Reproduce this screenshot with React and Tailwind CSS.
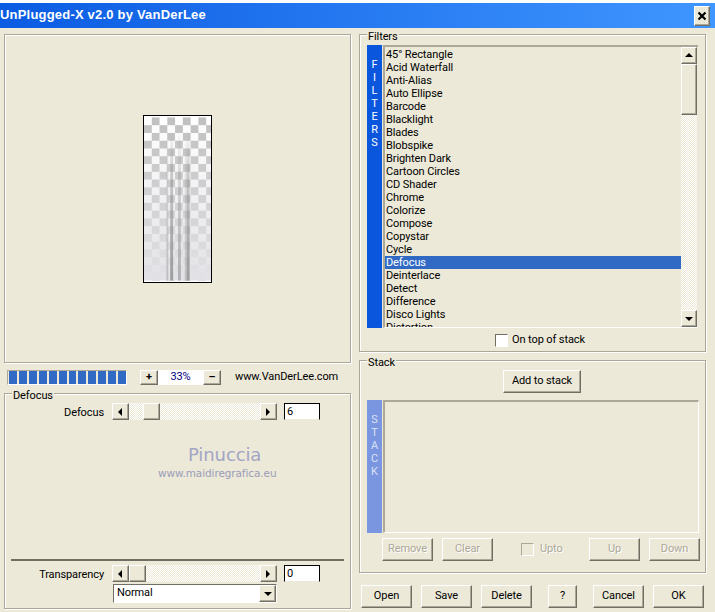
import React from 'react';

const FILTERS = [
  '45° Rectangle', 'Acid Waterfall', 'Anti-Alias', 'Auto Ellipse', 'Barcode', 'Blacklight', 'Blades', 'Blobspike',
  'Brighten Dark', 'Cartoon Circles', 'CD Shader', 'Chrome', 'Colorize', 'Compose', 'Copystar', 'Cycle', 'Defocus',
  'Deinterlace', 'Detect', 'Difference', 'Disco Lights', 'Distortion',
];

const raised = 'border border-t-white border-l-white border-r-[#716f64] border-b-[#716f64] shadow-[inset_-1px_-1px_0_#aca899]';
const dither = 'bg-[repeating-conic-gradient(#ece9d8_0_25%,#ffffff_0_50%)] bg-[length:2px_2px]';
const etched = 'relative border border-[#aca899] shadow-[inset_1px_1px_0_#ffffff,1px_1px_0_#ffffff]';

const Btn = ({ className = '', disabled, children }) => (
  <div className={`${raised} flex items-center justify-center bg-[#ece9d8] ${disabled ? 'text-[#aca899] [text-shadow:1px_1px_0_#fff]' : 'text-black'} ${className}`}>
    {children}
  </div>
);

const Legend = ({ children }) => (
  <span className="absolute left-[7px] top-[-5px] bg-[#ece9d8] px-[1px] leading-[14px] text-black">{children}</span>
);

const Arrow = ({ dir }) => {
  const points = { left: '6,1 6,9 2,5', right: '2,1 2,9 6,5', up: '1,6 9,6 5,2', down: '1,3 9,3 5,7' }[dir];
  return (
    <svg width="10" height="10" viewBox="0 0 10 10">
      <polygon points={points} fill="#000" />
    </svg>
  );
};

const Slider = ({ thumbLeft, value, label }) => (
  <div className="flex h-[17px] items-center">
    <span className="w-[99px] pt-[1px] text-right leading-none">{label}</span>
    <div className="ml-[8px] flex h-[17px] w-[165px]">
      <Btn className="h-[17px] w-[17px] shrink-0"><Arrow dir="left" /></Btn>
      <div className={`h-[17px] flex-1 ${dither}`}>
        <div className={`${raised} h-[17px] w-[17px] bg-[#ece9d8] ${thumbLeft}`} />
      </div>
      <Btn className="h-[17px] w-[17px] shrink-0"><Arrow dir="right" /></Btn>
    </div>
    <div className="ml-[7px] flex h-[17px] w-[36px] items-center border border-b-[#ece9d8] border-black bg-white pl-[2px] leading-none">{value}</div>
  </div>
);

const Preview = () => {
  const squares = [];
  for (let r = 0; r < 21; r++) {
    for (let c = 0; c < 9; c++) {
      if ((r + c) % 2 === 1) squares.push(<rect key={`${r}-${c}`} x={c * 8} y={r * 8} width="8" height="8" fill="#c0c0c0" />);
    }
  }
  return (
    <svg width="69" height="168" viewBox="0 0 69 168" className="block border border-black bg-white">
      <defs>
        <linearGradient id="fade" x1="0" y1="0" x2="0" y2="1">
          <stop offset="0" stopColor="#e2e2e6" stopOpacity="0" />
          <stop offset="1" stopColor="#e2e2e6" stopOpacity="1" />
        </linearGradient>
        <linearGradient id="bars" x1="0" y1="0" x2="0" y2="1">
          <stop offset="0" stopColor="#777" stopOpacity="0" />
          <stop offset="0.3" stopColor="#777" stopOpacity="0.35" />
          <stop offset="1" stopColor="#777" stopOpacity="0.65" />
        </linearGradient>
      </defs>
      {squares}
      <rect width="69" height="168" fill="url(#fade)" />
      <rect x="23" y="12" width="2" height="156" fill="url(#bars)" opacity="0.5" />
      <rect x="27" y="12" width="3" height="156" fill="url(#bars)" />
      <rect x="35" y="12" width="3" height="156" fill="url(#bars)" opacity="0.7" />
      <rect x="42" y="12" width="2" height="156" fill="url(#bars)" opacity="0.5" />
      <rect x="44" y="12" width="3" height="156" fill="url(#bars)" />
    </svg>
  );
};

const SideStrip = ({ letters, className }) => (
  <div className={`flex w-[15px] shrink-0 flex-col items-center ${className}`}>
    {letters.map((l, i) => (
      <span key={i} className="h-[13px] leading-[13px]">{l}</span>
    ))}
  </div>
);

export default function App() {
  return (
    <div className="flex h-[612px] w-[715px] flex-col overflow-hidden bg-[#ece9d8] font-['Roboto',sans-serif] text-[11px] tracking-[-0.1px] text-black">
      <div className="h-[3px] shrink-0 bg-white" />
      {/* title bar */}
      <div className="flex h-[25px] shrink-0 items-center justify-between bg-gradient-to-r from-[#0a5be2] to-[#4096ff] pr-[5px]">
        <span className="pb-[2px] font-['Liberation_Sans',sans-serif] text-[13px] font-bold tracking-[0.2px] text-white">UnPlugged-X v2.0 by VanDerLee</span>
        <Btn className="h-[20px] w-[16px] text-[14px] font-bold">
          <svg width="10" height="10" viewBox="0 0 10 10"><path d="M1.5 1.5 L8.5 8.5 M8.5 1.5 L1.5 8.5" stroke="#000" strokeWidth="2.2" /></svg>
        </Btn>
      </div>

      <div className="flex flex-1 pl-[4px] pt-[6px]">
        {/* left column */}
        <div className="flex w-[347px] shrink-0 flex-col">
          <div className={`${etched} flex h-[329px] justify-center pt-[80px]`}>
            <div><Preview /></div>
          </div>

          <div className="mt-[7px] flex h-[15px] items-center pl-[3px]">
            <div className="flex h-[15px] w-[120px] items-center gap-[2px] border border-[#aca899] border-b-white border-r-white pl-[1px]">
              {Array.from({ length: 12 }).map((_, i) => (
                <span key={i} className="h-[13px] w-[8px] bg-[#316ac5]" />
              ))}
            </div>
            <Btn className="ml-[13px] h-[15px] w-[18px] font-bold">+</Btn>
            <div className="flex h-[15px] w-[45px] items-center justify-center bg-white text-[#000080]">33%</div>
            <Btn className="h-[15px] w-[18px] font-bold">–</Btn>
            <span className="ml-[14px]">www.VanDerLee.com</span>
          </div>

          <div className={`${etched} mt-[8px] h-[216px]`}>
            <Legend>Defocus</Legend>
            <div className="pt-[9px]">
              <Slider thumbLeft="ml-[14px]" value="6" label="Defocus" />
            </div>
            <div className="mt-[24px] font-['DejaVu_Sans',sans-serif] text-[#a3a5c4]">
              <div className="pl-[183px] text-[18px] leading-[22px]">Pinuccia</div>
              <div className="pl-[153px] text-[10.5px] leading-[14px] text-[#9b9db8]">www.maidiregrafica.eu</div>
            </div>
            <div className="mx-[6px] mt-[79px] h-[2px] bg-[#716f64]" />
            <div className="mt-[4px]">
              <Slider thumbLeft="ml-0" value="0" label="Transparency" />
            </div>
            <div className="ml-[108px] mt-[2px] flex h-[19px] w-[164px] items-center justify-between border border-[#716f64] border-b-white border-r-white bg-white pl-[3px]">
              <span>Normal</span>
              <Btn className="h-[17px] w-[17px]"><Arrow dir="down" /></Btn>
            </div>
          </div>
        </div>

        {/* right column */}
        <div className="ml-[8px] flex w-[347px] shrink-0 flex-col">
          <div className={`${etched} h-[318px]`}>
            <Legend>Filters</Legend>
            <div className="flex h-[283px] pl-[7px] pt-[10px]">
              <SideStrip letters={['F', 'I', 'L', 'T', 'E', 'R', 'S']} className="h-[283px] bg-[#0a56dc] pt-[13px] text-white" />
              <div className="ml-[1px] flex h-[283px] w-[315px] border-2 border-[#aca899] border-b-white border-r-white border-b-[1px] border-r-0">
                <div className="h-full w-[296px] overflow-hidden pt-[1px]">
                  {FILTERS.map((f) => (
                    <div key={f} className={`h-[13px] pl-[1px] leading-[13px] ${f === 'Defocus' ? 'bg-[#316ac5] text-white' : ''}`}>{f}</div>
                  ))}
                </div>
                <div className={`flex h-full w-[16px] flex-col ${dither}`}>
                  <Btn className="h-[17px] w-[16px] shrink-0"><Arrow dir="up" /></Btn>
                  <div className={`${raised} h-[51px] w-[16px] shrink-0 bg-[#ece9d8]`} />
                  <div className="flex-1" />
                  <Btn className="h-[17px] w-[16px] shrink-0"><Arrow dir="down" /></Btn>
                </div>
              </div>
            </div>
            <div className="mt-[14px] flex items-center pl-[135px]">
              <span className="h-[13px] w-[13px] border border-[#716f64] border-b-white border-r-white bg-white" />
              <span className="ml-[4px]">On top of stack</span>
            </div>
          </div>

          <div className={`${etched} mt-[8px] h-[213px]`}>
            <Legend>Stack</Legend>
            <div className="flex justify-center pt-[9px] pl-[19px]">
              <Btn className="h-[23px] w-[78px]">Add to stack</Btn>
            </div>
            <div className="mt-[7px] flex h-[133px] pl-[7px]">
              <SideStrip letters={['S', 'T', 'A', 'C', 'K']} className="bg-[#7b96e0] pt-[13px] text-[#d9e0f5]" />
              <div className="ml-[1px] h-[133px] w-[316px] border-2 border-[#aca899] border-b-white border-r-white border-b-[1px] border-r-[1px]" />
            </div>
            <div className="mt-[5px] flex h-[23px] items-center pl-[22px]">
              <Btn disabled className="h-[23px] w-[51px]">Remove</Btn>
              <Btn disabled className="ml-[9px] h-[23px] w-[51px]">Clear</Btn>
              <span className="ml-[28px] h-[13px] w-[13px] border border-[#aca899] border-b-white border-r-white" />
              <span className="ml-[6px] w-[49px] text-[#aca899] [text-shadow:1px_1px_0_#fff]">Upto</span>
              <Btn disabled className="h-[23px] w-[51px]">Up</Btn>
              <Btn disabled className="ml-[9px] h-[23px] w-[51px]">Down</Btn>
            </div>
          </div>

          <div className="mt-[12px] flex h-[23px] pl-[2px]">
            <Btn className="h-[23px] w-[51px]">Open</Btn>
            <Btn className="ml-[9px] h-[23px] w-[51px]">Save</Btn>
            <Btn className="ml-[9px] h-[23px] w-[51px]">Delete</Btn>
            <Btn className="ml-[16px] h-[23px] w-[29px]">?</Btn>
            <Btn className="ml-[16px] h-[23px] w-[51px]">Cancel</Btn>
            <Btn className="ml-[9px] h-[23px] w-[51px]">OK</Btn>
          </div>
        </div>
      </div>
    </div>
  );
}
